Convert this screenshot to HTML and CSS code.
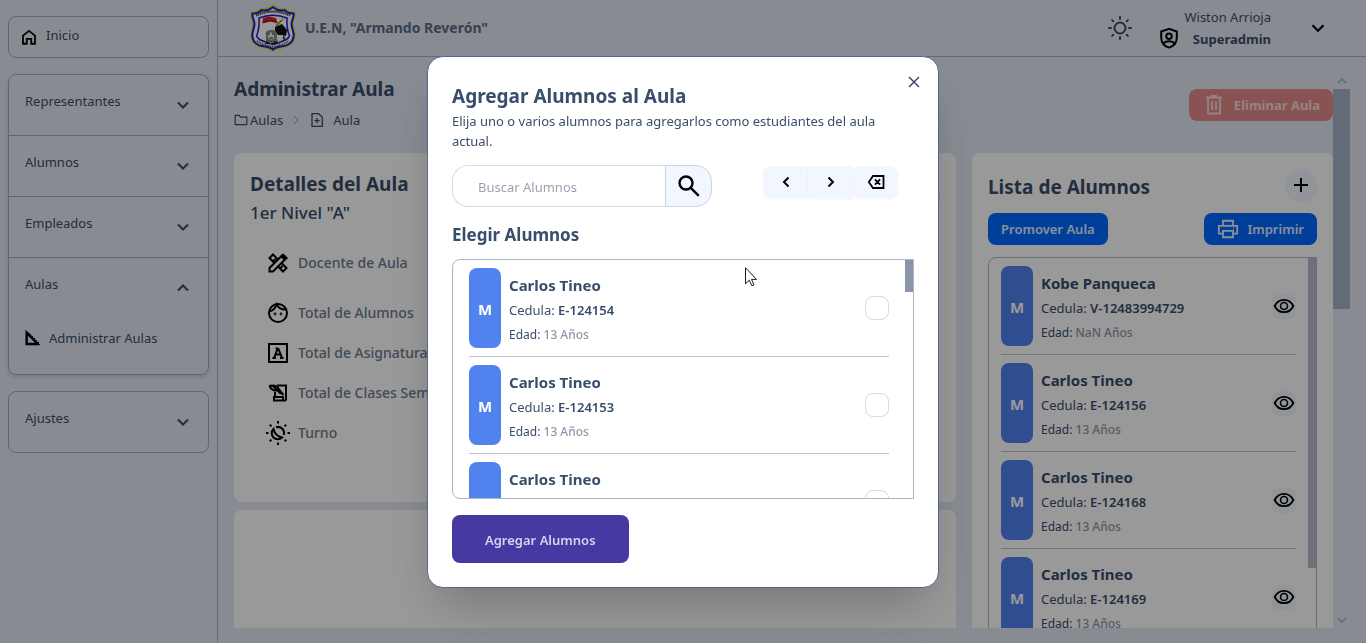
FILE: index.html
```html
<!DOCTYPE html>
<html lang="es">
<head>
<meta charset="utf-8">
<meta name="viewport" content="width=device-width, initial-scale=1">
<title>Administrar Aula</title>
<link rel="stylesheet" href="styles.css">
</head>
<body>
<svg class="sprite" aria-hidden="true">
  <symbol id="down" viewBox="0 0 24 24"><path fill="none" stroke="currentColor" stroke-width="2.500" d="m6 9 6 6 6-6"/></symbol>
  <symbol id="up" viewBox="0 0 24 24"><path fill="none" stroke="currentColor" stroke-width="2.500" d="m6 15 6-6 6 6"/></symbol>
  <symbol id="eye" viewBox="0 0 24 24"><path fill="none" stroke="currentColor" stroke-width="1.800" d="M2.700 12C4.500 8.100 8 5.800 12 5.800s7.500 2.300 9.300 6.200c-1.800 3.900-5.300 6.200-9.300 6.200S4.500 15.900 2.700 12z"/><circle cx="12" cy="12" r="3.500" fill="none" stroke="currentColor" stroke-width="1.600"/></symbol>
</svg>
<div class="app">
  <nav class="sidebar">
    <a class="home" href="#"><svg class="i18" viewBox="0 0 24 24"><path fill="none" stroke="currentColor" stroke-width="2.400" d="M4 10.200 12 3.800l8 6.400V21h-5v-6.500H9V21H4z"/></svg>Inicio</a>
    <div class="accordion raised">
      <button class="fold">Representantes<svg class="i20"><use href="#down"/></svg></button>
      <button class="fold">Alumnos<svg class="i20"><use href="#down"/></svg></button>
      <button class="fold">Empleados<svg class="i20"><use href="#down"/></svg></button>
      <button class="fold" aria-expanded="true">Aulas<svg class="i20"><use href="#up"/></svg></button>
      <a class="sub" href="#"><svg class="i16" viewBox="0 0 24 24"><path fill="none" stroke="currentColor" stroke-width="3.600" d="M2.500 4v17H19z"/><path fill="none" stroke="currentColor" stroke-width="2" stroke-dasharray="2 2" d="M5 4l16 16"/></svg>Administrar Aulas</a>
    </div>
    <div class="accordion">
      <button class="fold">Ajustes<svg class="i20"><use href="#down"/></svg></button>
    </div>
  </nav>
  <div class="main">
    <header class="topbar">
      <div class="brand">
        <svg class="crest" viewBox="0 0 48 48">
          <path d="M3 9c4 0 7-1 9-3.500 4 1 8 0 12-3.500 4 3.500 8 4.500 12 3.500C38 8 41 9 45 9c1 4-2 7-2 11 0 5 3 8 2 13-1 7-6 9-12 10-4 .6-7 1.500-9 3.500-2-2-5-2.900-9-3.500C9 42 4 40 3 33c-1-5 2-8 2-13 0-4-3-7-2-11z" fill="#fff" stroke="#f0d838" stroke-width="3"/>
          <path d="M3.500 9.500c4 0 7-1 9-3.300 4 1 7.500.2 11.500-3 4 3.200 7.500 4 11.500 3 2 2.300 5 3.300 9 3.300.8 4-2 6.500-2 10.500 0 5 3 8 2 13-1 6.500-5.500 8.300-11.500 9.300-4 .6-7 1.500-9 3.300-2-1.800-5-2.700-9-3.300C9 41.300 4.500 39.500 3.500 33c-1-5 2-8 2-13 0-4-2.800-6.500-2-10.500z" fill="#fff" stroke="#1a1fd0" stroke-width="2"/>
          <path d="M7 11.500C12 9 18 7.500 24 7.500S36 9 41 11.500" fill="none" stroke="#333" stroke-width="2.200" stroke-dasharray="1.300 .7"/>
          <path d="M10 14c9-3.500 19-3.500 28 0-.5 7 .5 13 2.500 18-2 5-9 5.500-16.500 8.500C16.500 37.500 9.500 37 7.500 32 9.500 27 10.500 21 10 14z" fill="#fff" stroke="#1a1fd0" stroke-width="1.500"/>
          <path d="M8 37c5 3.500 10 4 16 6 6-2 11-2.500 16-6" fill="none" stroke="#444" stroke-width="1.600" stroke-dasharray="1 .8"/>
          <path d="m14 14 6-1.500 7 1.500 1.500 5-7-1.500-8 2z" fill="#d81e26"/>
          <path d="m13.500 18 8-1.300 7 2" fill="none" stroke="#7d1118" stroke-width=".8"/>
          <path d="m35 14-8 8" stroke="#e8d632" stroke-width="2"/><path d="m33 16-6 6" stroke="#20329c" stroke-width=".8"/>
          <path d="m26 23 7-3 5 6-1 6-4-1-4 0-3-4z" fill="#111"/>
          <path d="m34 29 3 8-3-2z" fill="#333"/>
          <path d="M17 37c0-3 0-3 0-5-1-4 1-6 5-6s6 2 6 5c0 3-1 3 1 6l2 3H16z" fill="#888"/>
          <path d="M19 30c1-2 4-2 6 0v4c-1 2-4 2-6 0z" fill="#eee"/><path d="M19 30h2m2 0h2m-5 4h4" stroke="#222"/><path d="m16 40 2-3 4 3 5-3 3 3z" fill="#222"/>
        </svg>
        <span>U.E.N, "Armando Reverón"</span>
      </div>
      <div class="account">
        <button class="plain" aria-label="Cambiar tema"><svg class="i24 ink" viewBox="0 0 24 24" fill="none" stroke="currentColor" stroke-width="2"><circle cx="12" cy="12" r="5.500"/><g stroke-linecap="round"><path d="M12 1v2M12 21v2M1 12h2M21 12h2M4.200 4.200l1 1M18.800 18.800l1 1M4.200 19.800l1-1M18.800 5.200l1-1"/></g></svg></button>
        <div class="user">
          <svg class="i22" viewBox="0 0 24 24" fill="none" stroke="currentColor" stroke-width="2.200"><path d="M12 2 3.500 5v6.500C3.500 17 7 21 12 22.500 17 21 20.500 17 20.500 11.500V5z"/><circle cx="12" cy="10" r="3"/><path d="M6 18c2-3.300 10-3.300 12 0"/></svg>
          <div class="who"><span>Wiston Arrioja</span><strong>Superadmin</strong></div>
        </div>
        <button class="plain" aria-label="Menú de usuario"><svg class="i22"><use href="#down"/></svg></button>
      </div>
    </header>
    <main class="viewport">
      <div class="page">
        <div class="head">
          <div class="titles">
            <h1>Administrar Aula</h1>
            <div class="crumbs">
              <a href="#"><svg class="i14" viewBox="0 0 24 24" fill="none" stroke="currentColor" stroke-width="2"><path d="M2 20V4h7l2 3h11v13z"/></svg>Aulas</a>
              <svg class="i10 sep" viewBox="0 0 10 10" fill="none" stroke="currentColor"><path d="m3 1 4 4-4 4"/></svg>
              <span><svg class="i16" viewBox="0 0 24 24" fill="none" stroke="currentColor" stroke-width="2"><path d="M6 2.500h8.500L20 8v13.500H4.500v-19zM12 9v8M8 13h8"/></svg>Aula</span>
            </div>
          </div>
          <button class="btn danger"><svg class="i24" viewBox="0 0 24 24" fill="none" stroke="currentColor" stroke-width="1.800"><path d="M4 4.500h16M9 3h6M6 5v15.500h12V5M10 8.500V17M14 8.500V17"/></svg>Eliminar Aula</button>
        </div>
        <div class="columns">
          <div class="left">
            <section class="card details">
              <button class="round edit" aria-label="Editar aula"></button>
              <h2>Detalles del Aula</h2>
              <h3>1er Nivel "A"</h3>
              <ul class="facts">
                <li class="lead"><svg class="i24" viewBox="0 0 24 24" fill="none" stroke="currentColor" stroke-width="2"><path d="m3.500 7 3.500-3.500L20.500 17 17 20.500zM7.500 10l2-2M14.500 17l2-2"/><path d="M3.500 20.500V17L16.500 4 20 7.500l-13 13z" fill="#fff"/><path d="m15.500 5.500 3 3L20.500 7l-3-3z" fill="currentColor"/></svg>Docente de Aula</li>
                <li><svg class="i24" viewBox="0 0 24 24" fill="none" stroke="currentColor" stroke-width="2"><circle cx="12" cy="12" r="9"/><path d="M3.500 10.500C7 9.500 9.500 7 10.500 3.500 12.500 7 16 8.800 20.500 8.500"/><circle cx="9" cy="13" r=".4"/><circle cx="15" cy="13" r=".4"/></svg>Total de Alumnos</li>
                <li><svg class="i24" viewBox="0 0 24 24" fill="none" stroke="currentColor" stroke-width="2"><path d="M3 3h18v18H3z"/><path d="M6.500 17H10M14 17h3.500M8 17l3.500-9h1L16 17M10 13.500h4.500M9.500 7.500h3"/></svg>Total de Asignaturas</li>
                <li><svg class="i24" viewBox="0 0 24 24" fill="none" stroke="currentColor" stroke-width="2"><path d="M11 4.500h9v15M20 19.500H8V16h9v3"/><path d="M3 5c5-1.500 9 0 10 3.500l4.500 5.500M3.500 5c2 4 5 5.500 9 4M7 5l8 8M9 11v4"/></svg>Total de Clases Semanales</li>
                <li><svg class="i24" viewBox="0 0 24 24" fill="none" stroke="currentColor" stroke-width="2"><path d="M10 6.300A6 6 0 0 1 17.700 14"/><path d="M7.500 8a6 6 0 0 0 8.500 8.500C11.500 15.500 8.500 12.500 7.500 8z"/><path d="M12 0v2.500M12 21.500V24M0 12h2.500M21.500 12H24M3.800 3.800l1.600 1.600M18.600 18.600l1.600 1.600M3.800 20.200l1.600-1.600M18.600 5.400l1.600-1.600"/></svg>Turno</li>
              </ul>
            </section>
            <section class="card extra"></section>
          </div>
          <section class="card roster">
            <div class="row"><h2>Lista de Alumnos</h2><button class="round" aria-label="Agregar alumno"><svg class="i24" viewBox="0 0 24 24" stroke="currentColor" stroke-width="2"><path d="M12 5v14M5 12h14"/></svg></button></div>
            <div class="row"><button class="btn primary">Promover Aula</button><button class="btn primary"><svg class="i22" viewBox="0 0 24 24" fill="none" stroke="currentColor" stroke-width="2"><path d="M6.500 8V3h11v5M6 17H2V8.500h20V17h-4M6.500 14h11v7h-11z"/><path d="M17.500 11.500h1"/></svg>Imprimir</button></div>
            <div class="list tall">
              <ul class="items">
                <li><span class="badge">M</span><div class="info"><strong>Kobe Panqueca</strong><span>Cedula: <b>V-12483994729</b></span><small>Edad: <i>NaN Años</i></small></div><button class="view" aria-label="Ver alumno"><svg class="i24"><use href="#eye"/></svg></button></li>
                <li><span class="badge">M</span><div class="info"><strong>Carlos Tineo</strong><span>Cedula: <b>E-124156</b></span><small>Edad: <i>13 Años</i></small></div><button class="view" aria-label="Ver alumno"><svg class="i24"><use href="#eye"/></svg></button></li>
                <li><span class="badge">M</span><div class="info"><strong>Carlos Tineo</strong><span>Cedula: <b>E-124168</b></span><small>Edad: <i>13 Años</i></small></div><button class="view" aria-label="Ver alumno"><svg class="i24"><use href="#eye"/></svg></button></li>
                <li><span class="badge">M</span><div class="info"><strong>Carlos Tineo</strong><span>Cedula: <b>E-124169</b></span><small>Edad: <i>13 Años</i></small></div><button class="view" aria-label="Ver alumno"><svg class="i24"><use href="#eye"/></svg></button></li>
              </ul>
              <div class="track"><div class="thumb"></div></div>
            </div>
          </section>
        </div>
      </div>
      <div class="scrollbar"><svg class="i16"><use href="#up"/></svg><div class="rail"><div class="grip"></div></div><svg class="i16"><use href="#down"/></svg></div>
    </main>
  </div>
</div>

<div class="backdrop">
  <div class="modal" role="dialog" aria-modal="true" aria-labelledby="modal-title">
    <button class="close" aria-label="Cerrar"><svg class="i12" viewBox="0 0 12 12" stroke="currentColor" stroke-width="1.500"><path d="m1 1 10 10M11 1 1 11"/></svg></button>
    <h2 id="modal-title">Agregar Alumnos al Aula</h2>
    <p>Elija uno o varios alumnos para agregarlos como estudiantes del aula actual.</p>
    <div class="tools">
      <form class="search">
        <input type="text" placeholder="Buscar Alumnos" aria-label="Buscar Alumnos">
        <button type="button" aria-label="Buscar"><svg class="i24" viewBox="0 0 24 24" fill="none" stroke="currentColor" stroke-width="2.400"><circle cx="9" cy="9" r="6.500"/><path d="m13.800 13.800 8 8"/></svg></button>
      </form>
      <div class="pager">
        <button aria-label="Anterior"><svg class="i16" viewBox="0 0 16 16" fill="none" stroke="currentColor" stroke-width="2"><path d="m10.500 3.500-4.500 4.500 4.500 4.500"/></svg></button>
        <button aria-label="Siguiente"><svg class="i16" viewBox="0 0 16 16" fill="none" stroke="currentColor" stroke-width="2"><path d="m5.500 3.500 4.500 4.500-4.500 4.500"/></svg></button>
        <button aria-label="Limpiar"><svg class="i18" viewBox="0 0 24 24" fill="none" stroke="currentColor" stroke-width="2.400"><path d="M8 4h14v16H8l-5.500-8zM10.500 8.500l7 7M17.500 8.500l-7 7"/></svg></button>
      </div>
    </div>
    <h3>Elegir Alumnos</h3>
    <div class="list short">
      <ul class="items">
        <li><span class="badge">M</span><label class="info" for="s1"><strong>Carlos Tineo</strong><span>Cedula: <b>E-124154</b></span><small>Edad: <i>13 Años</i></small></label><input type="checkbox" id="s1"></li>
        <li><span class="badge">M</span><label class="info" for="s2"><strong>Carlos Tineo</strong><span>Cedula: <b>E-124153</b></span><small>Edad: <i>13 Años</i></small></label><input type="checkbox" id="s2"></li>
        <li><span class="badge"></span><label class="info" for="s3"><strong>Carlos Tineo</strong></label><input type="checkbox" id="s3"></li>
      </ul>
      <div class="track"><div class="thumb"></div></div>
      <svg class="pointer" viewBox="0 0 12 20"><path d="M.5.700v16l3.800-3.500 2.500 5.600 2.200-1-2.500-5.400h5z" fill="#fff" stroke="#1b1b28"/></svg>
    </div>
    <button class="submit">Agregar Alumnos</button>
  </div>
</div>
</body>
</html>
```

FILE: styles.css
```css
* { box-sizing: border-box; }
body { margin: 0; font: 13px/20px "Noto Sans", "Open Sans", sans-serif; color: #394e6a; background: #e3e9f4; }
h1, h2, h3, p, ul { margin: 0; padding: 0; }
h1, h2 { font-size: 19px; line-height: 30px; font-weight: 700; }
ul { list-style: none; }
a { color: inherit; text-decoration: none; }
button, input { font: inherit; color: inherit; margin: 0; }
button { padding: 0; border: 0; background: none; cursor: pointer; }
svg { display: block; flex: none; fill: currentColor; }
svg[fill="none"] { fill: none; }
.sprite { width: 0; height: 0; position: absolute; }
.i10 { width: 10px; height: 10px; }
.i12 { width: 12px; height: 12px; }
.i14 { width: 14px; height: 14px; }
.i16 { width: 16px; height: 16px; }
.i18 { width: 18px; height: 18px; }
.i20 { width: 20px; height: 20px; }
.i22 { width: 22px; height: 22px; }
.i24 { width: 24px; height: 24px; }

.app { display: flex; height: 100vh; overflow: hidden; }
.sidebar { flex: none; width: 218px; padding: 16px 8px; border-right: 1px solid #a9b2c2; display: flex; flex-direction: column; gap: 16px; }
.home { display: flex; align-items: center; gap: 8px; height: 42px; padding: 0 11px 4px; border: 1px solid #a0abbb; border-radius: 8px; }
.home svg { color: #000; margin-top: 4px; }
.accordion { border: 1px solid #a0abbb; border-radius: 8px; }
.raised { box-shadow: 0 2px 4px #8f9bac66; }
.fold { display: flex; justify-content: space-between; align-items: flex-start; width: 100%; height: 60px; padding: 16px 15px 16px 16px; }
.fold svg { margin: 4px 0; }
.fold + .fold { border-top: 1px solid #a0abbb; height: 61px; }
.sub { display: flex; align-items: center; gap: 8px; height: 40px; margin: 0 16px 16px; }
.sub svg { color: #000; }

.main { flex: 1; min-width: 0; display: flex; flex-direction: column; }
.topbar { display: flex; justify-content: space-between; align-items: center; height: 57px; flex: none; padding: 0 37px 0 31px; border-bottom: 1px solid #a9b2c2; }
.brand { display: flex; align-items: center; gap: 8px; font-size: 14px; font-weight: 700; }
.brand span { opacity: .8; }
.crest { width: 48px; height: 48px; }
.account { display: flex; align-items: center; gap: 26px; color: #000; }
.ink { color: #394e6a; }
.user { display: flex; align-items: flex-end; gap: 4px; margin-right: 10px; }
.who { display: flex; flex-direction: column; align-items: flex-end; gap: 2px; color: #394e6a; }

.viewport { flex: 1; min-height: 0; display: flex; margin: 16px 16px 15px; }
.page { flex: 1; min-width: 0; overflow: hidden; }
.head { display: flex; justify-content: space-between; align-items: center; height: 64px; margin-bottom: 16px; }
.titles { align-self: flex-start; }
.titles h1 { line-height: 32px; }
.crumbs, .crumbs a, .crumbs span { display: flex; align-items: center; }
.crumbs { gap: 8px; margin-top: 5px; }
.crumbs a { gap: 2px; }
.crumbs span { gap: 8px; }
.sep { opacity: .5; }
.btn { display: flex; align-items: center; gap: 8px; height: 32px; padding: 0 13px; border-radius: 8px; font-weight: 600; }
.danger { background: #e58b8b; color: #f6dcdc; font-weight: 700; }
.primary { background: #0069ff; color: #e6f0ff; }
.columns { display: grid; grid-template-columns: 2fr 1fr; gap: 16px; }
.left { display: grid; grid-template-rows: 349px 349px; gap: 8px; }
.card { background: #fff; border-radius: 8px; padding: 16px; }
.details h3 { font-size: 17px; line-height: 28px; font-weight: 500; }
.facts { padding: 16px; font-size: 14px; font-weight: 500; color: #6b7a90; }
.facts li { display: flex; align-items: center; gap: 8px; height: 40px; }
.facts .lead { margin-bottom: 10px; }
.facts svg { color: #000; }
.round { display: grid; place-items: center; width: 32px; height: 32px; border-radius: 50%; background: #f2f7ff; color: #000; box-shadow: 0 1px 2px #0000000d; }
.edit { float: right; margin-top: 12px; background: #e3e9f4; }
.row { display: flex; justify-content: space-between; align-items: center; }
.row h2 { line-height: 28px; padding-top: 4px; }
.row + .row { margin: 12px 0; }

.list { position: relative; display: flex; border: 1px solid #aeb7c5; border-radius: 8px 0 0 8px; overflow: hidden; }
.tall { height: 440px; }
.tall .items { padding: 0 12px; }
.tall .thumb { height: 310px; background: #b6bbca; }
.short { height: 240px; }
.items { flex: 1; min-width: 0; padding: 0 16px; }
.items li { display: flex; align-items: center; gap: 8px; height: 97px; border-bottom: 1px solid #bcc5d1; }
.badge { display: grid; place-items: center; width: 32px; height: 80px; padding-top: 2px; border-radius: 8px; background: #5183ef; color: #fff; font-size: 15px; font-weight: 700; }
.info { flex: 1; height: 80px; padding-top: 6px; display: flex; flex-direction: column; gap: 4px; }
.info strong { font-size: 15px; line-height: 22px; }
.info b { font-weight: 600; }
.info small { font-size: 12px; line-height: 22px; }
.info i { font-style: normal; font-weight: 500; color: #8c98aa; }
.view { border-radius: 8px; background: #f2f7ff; color: #000; box-shadow: 0 1px 2px #0000000d; }
.track { width: 8px; flex: none; }
.thumb { height: 32px; background: #8896a8; }
.items input { appearance: none; width: 24px; height: 24px; border: 1px solid #d7dce2; border-radius: 8px; background: #fff; }
.scrollbar { width: 17px; flex: none; display: flex; flex-direction: column; align-items: center; color: #a7b2c8; }
.rail { flex: 1; width: 100%; }
.grip { height: 42%; background: #a7b2c8; }

.backdrop { position: fixed; inset: 0; display: grid; place-items: center; background: #0006; }
.modal { position: relative; width: 92%; max-width: 512px; padding: 24px; border: 1px solid #52678d; border-radius: 16px; background: #fff; box-shadow: 0 25px 50px -12px #00000040; }
.close { position: absolute; top: 9px; right: 8px; width: 32px; height: 32px; display: grid; place-items: center; }
.modal h3 { font-size: 17px; line-height: 28px; font-weight: 700; padding-top: 2px; margin: 12px 0 10px; }
.tools { display: flex; justify-content: space-between; align-items: flex-start; padding-right: 16px; margin-top: 14px; }
.search { display: flex; width: 260px; height: 42px; }
.search input { flex: 1; min-width: 0; padding: 2px 25px 0; border: 1px solid #d7dce2; border-right: 0; border-radius: 16px 0 0 16px; outline: 0; }
.search input::placeholder { color: #9ca3af; opacity: 1; }
.search button { width: 47px; display: grid; place-items: center; border: 1px solid #cbd4e2; border-radius: 0 16px 16px 0; background: #f2f7ff; color: #000; }
.pager { display: flex; margin-top: 1px; }
.pager button { width: 45px; height: 32px; display: grid; place-items: center; background: #f2f7ff; color: #000; box-shadow: 0 1px 2px #0000000d; }
.pager button:first-child { border-radius: 8px 0 0 8px; }
.pager button:last-child { border-radius: 8px; }
.submit { margin-top: 16px; height: 48px; padding: 2px 33px 0; border-radius: 8px; background: #463aa2; color: #d6d4ee; font-weight: 600; }
.pointer { position: absolute; left: 292px; top: 7px; width: 12px; height: 20px; }
```
